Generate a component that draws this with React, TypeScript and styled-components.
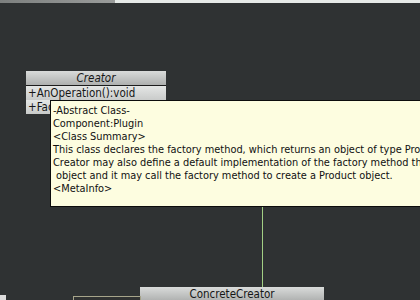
import { createGlobalStyle, styled } from "styled-components";

const GlobalStyle = createGlobalStyle`
  html, body {
    margin: 0;
    padding: 0;
    background: #2f3233;
  }
  body {
    font-family: "DejaVu Sans Condensed", "DejaVu Sans", sans-serif;
    font-stretch: condensed;
  }
`;

const Screen = styled.div`
  width: 420px;
  height: 300px;
  display: flex;
  flex-direction: column;
  overflow: hidden;
  background: #2f3233;
`;

const TopStrip = styled.div`
  height: 3px;
  display: flex;
  div:first-child {
    width: 115px;
    background: linear-gradient(to right, #7d807f, #9a9c9b);
  }
  div:last-child {
    flex: 1;
    background: #e6eae8;
  }
`;

const Canvas = styled.div`
  position: relative;
  flex: 1;
`;

// a class node on the diagram canvas
const ClassBox = styled.div<{ $x: number; $y: number; $w: number }>`
  position: absolute;
  left: ${(p) => p.$x}px;
  top: ${(p) => p.$y}px;
  width: ${(p) => p.$w}px;
  display: flex;
  flex-direction: column;
  background: #c4c6c5;
  font-size: 11.5px;
  color: #161616;
`;

const ClassHeader = styled.div<{ $italic?: boolean }>`
  height: 14px;
  line-height: 14px;
  text-align: center;
  font-style: ${(p) => (p.$italic ? "italic" : "normal")};
  background: linear-gradient(to bottom, #d9dbda, #aeb0af);
  border-bottom: 1px solid #1c1c1c;
`;

const Member = styled.div`
  height: 14px;
  line-height: 14px;
  padding-left: 2px;
  background: linear-gradient(to bottom, #e4e6e5, #c9cbca);
  white-space: nowrap;
  overflow: hidden;
`;

const Link = styled.div`
  position: absolute;
  left: 262px;
  top: 204px;
  width: 1px;
  height: 81px;
  background: #a2cf84;
`;

const Tooltip = styled.div`
  position: absolute;
  left: 50px;
  top: 97px;
  width: 380px;
  height: 107px;
  box-sizing: border-box;
  padding: 3px 0 0 2px;
  background: #fdfde0;
  border: 1px solid #0c0c0c;
  font-size: 10.9px;
  line-height: 13px;
  color: #101010;
  white-space: pre;
  overflow: hidden;
`;

const StubBox = styled.div<{ $x: number; $w: number }>`
  position: absolute;
  left: ${(p) => p.$x}px;
  top: 293px;
  width: ${(p) => p.$w}px;
  height: 10px;
  box-sizing: border-box;
  border: 1px solid #a6a48a;
  background: #303232;
`;

const Marker = styled.div`
  position: absolute;
  left: 0;
  top: 292px;
  width: 6px;
  height: 10px;
  background: #dcdcdc;
`;

const tooltipLines = [
  "-Abstract Class-",
  "Component:Plugin",
  "<Class Summary>",
  "This class declares the factory method, which returns an object of type Product.",
  "Creator may also define a default implementation of the factory method that returns a default ConcreteProduct",
  " object and it may call the factory method to create a Product object.",
  "<MetaInfo>",
];

export default function App() {
  return (
    <Screen>
      <GlobalStyle />
      <TopStrip>
        <div />
        <div />
      </TopStrip>
      <Canvas>
        <ClassBox $x={26} $y={68} $w={140}>
          <ClassHeader $italic>Creator</ClassHeader>
          <Member>+AnOperation():void</Member>
          <Member>+FactoryMethod():Product</Member>
        </ClassBox>
        <Link />
        <ClassBox $x={140} $y={284} $w={184}>
          <ClassHeader>ConcreteCreator</ClassHeader>
        </ClassBox>
        <Marker />
        <StubBox $x={73} $w={68} />
        <Tooltip>{tooltipLines.join("\n")}</Tooltip>
      </Canvas>
    </Screen>
  );
}
